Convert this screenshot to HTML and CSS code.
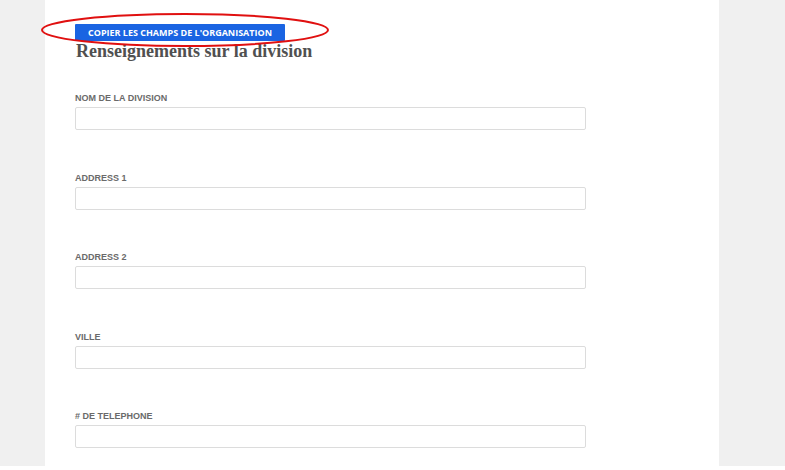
FILE: index.html
```html
<!DOCTYPE html>
<html lang="fr">
<head>
<meta charset="utf-8">
<link rel="stylesheet" href="styles.css">
</head>
<body>
<div class="page">
  <div class="side"></div>
  <main class="panel">
    <button class="copy-btn">COPIER LES CHAMPS DE L'ORGANISATION</button>
    <h2 class="title">Renseignements sur la division</h2>
    <div class="fields">
      <div class="field"><label class="label">NOM DE LA DIVISION</label><div class="input"></div></div>
      <div class="field"><label class="label">ADDRESS 1</label><div class="input"></div></div>
      <div class="field"><label class="label">ADDRESS 2</label><div class="input"></div></div>
      <div class="field"><label class="label">VILLE</label><div class="input"></div></div>
      <div class="field"><label class="label"># DE TELEPHONE</label><div class="input"></div></div>
    </div>
    <svg class="mark" width="292" height="38" viewBox="0 0 292 38"><ellipse cx="146" cy="19" rx="143" ry="16" fill="none" stroke="#e01010" stroke-width="2"/></svg>
  </main>
  <div class="side side-right"></div>
</div>
</body>
</html>
```

FILE: styles.css
```css
html, body {
  margin: 0;
  padding: 0;
  background: #ffffff;
}
.page {
  display: flex;
  height: 466px;
  width: 785px;
  background: #f0f0f0;
  overflow: hidden;
}
.side {
  width: 45px;
  flex: none;
}
.side-right {
  flex: 1;
}
.panel {
  position: relative;
  width: 644px;
  flex: none;
  background: #ffffff;
  padding: 24px 0 0 30px;
}
.copy-btn {
  display: block;
  width: 210px;
  height: 17px;
  margin: 0;
  padding: 0;
  border: none;
  border-radius: 1px;
  background: #1a64e2;
  color: #ffffff;
  font-family: "Open Sans", "Liberation Sans", sans-serif;
  font-weight: 700;
  font-size: 9px;
  line-height: 17px;
  text-align: center;
}
.title {
  margin: 0;
  font-family: "Liberation Serif", serif;
  font-weight: 700;
  font-size: 18px;
  line-height: 20px;
  color: #505050;
  padding-left: 1px;
}
.fields {
  display: flex;
  flex-direction: column;
  gap: 42.5px;
  margin-top: 32px;
}
.field {
  display: flex;
  flex-direction: column;
  gap: 4px;
}
.label {
  display: block;
  font-family: "Liberation Sans", Arial, sans-serif;
  font-weight: 700;
  font-size: 9px;
  line-height: 10px;
  color: #6a6a6a;
}
.input {
  width: 509px;
  height: 21px;
  border: 1px solid #dcdcdc;
  border-radius: 2px;
  background: #ffffff;
}
.mark {
  position: absolute;
  left: -6px;
  top: 11px;
}
```
